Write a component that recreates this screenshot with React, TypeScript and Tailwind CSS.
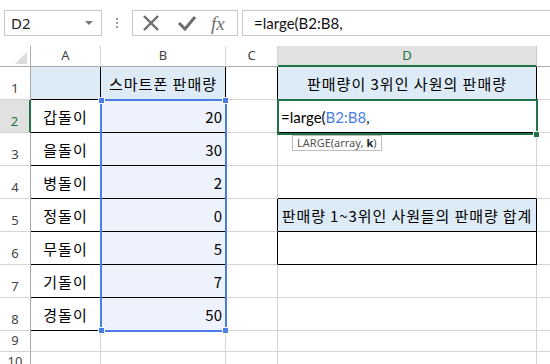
import React from "react"

const kr = { fontFamily: '"Noto Sans CJK KR", "Noto Sans", sans-serif' }
const ui = { fontFamily: '"Noto Sans", "Noto Sans CJK KR", sans-serif' }
const formula = { fontFamily: 'Lato, "Noto Sans", sans-serif' }

const names = ["갑돌이", "을돌이", "병돌이", "정돌이", "무돌이", "기돌이", "경돌이"]
const sales = [20, 30, 2, 0, 5, 7, 50]

function Toolbar() {
  return (
    <div className="flex h-[46px] items-start bg-white pt-[10px]">
      <div className="ml-[4px] flex h-[26px] w-[98px] items-center justify-between border border-[#c6c6c6] pl-[6px] pr-[8px]">
        <span className="text-[15px] text-[#222]" style={ui}>D2</span>
        <span className="block h-0 w-0 border-x-[4px] border-t-[4px] border-x-transparent border-t-[#777]" />
      </div>
      <div className="flex h-[26px] w-[30px] flex-col items-center justify-center gap-[2px]">
        <span className="h-[2px] w-[2px] bg-[#9a9a9a]" />
        <span className="h-[2px] w-[2px] bg-[#9a9a9a]" />
        <span className="h-[2px] w-[2px] bg-[#9a9a9a]" />
      </div>
      <div className="flex h-[26px] w-[106px] items-center border border-[#c6c6c6] pl-[9px]">
        <svg width="18" height="18" viewBox="0 0 18 18">
          <path d="M2 2 L16 16 M16 2 L2 16" stroke="#6e6e6e" strokeWidth="2.4" fill="none" />
        </svg>
        <svg width="20" height="18" viewBox="0 0 20 18" className="ml-[17px]">
          <path d="M2 9 L8 15 L18 3" stroke="#6e6e6e" strokeWidth="3" fill="none" />
        </svg>
        <span className="ml-[14px] text-[19px] italic leading-none text-[#6e6e6e]" style={{ fontFamily: '"Liberation Serif", serif' }}>
          fx
        </span>
      </div>
      <div className="ml-[4px] flex h-[26px] flex-1 items-center border-y border-l border-[#c6c6c6] pl-[11px]">
        <span className="text-[15px] text-[#111]" style={formula}>=large(B2:B8,</span>
      </div>
    </div>
  )
}

const grid = "border-r border-b border-[#d4d4d4]"
const rowHead = "flex items-end justify-center pb-[1px] text-[13px] text-[#444] border-r border-r-[#ababab] border-b border-b-[#d4d4d4]"

export default function App() {
  const rows = Array.from({ length: 10 }, (_, i) => i + 1)
  return (
    <div className="h-[364px] w-[550px] overflow-hidden bg-white">
      <Toolbar />
      <div className="relative grid grid-cols-[31px_70px_125px_52px_259px_13px] grid-rows-[21px_repeat(8,33px)_21px_21px]" style={kr}>
        {/* column headers */}
        <div className="relative border-r border-b border-[#ababab]">
          <span className="absolute bottom-[2px] right-[3px] h-0 w-0 border-b-[12px] border-l-[12px] border-l-transparent border-b-[#dcdcdc]" />
        </div>
        {["A", "B", "C"].map((c) => (
          <div key={c} className="flex items-center justify-center border-r border-r-[#d4d4d4] border-b border-b-[#ababab] text-[13px] text-[#444]" style={ui}>
            {c}
          </div>
        ))}
        <div className="flex items-center justify-center border-r border-r-[#c6c6c6] border-b-2 border-b-[#217346] bg-[#e1e1e1] text-[13px] text-[#217346]" style={ui}>
          D
        </div>
        <div className="border-b border-[#ababab]" />

        {rows.map((r) => {
          const inTable = r <= 8
          const dBox = r === 1 || r === 2 || r === 5 || r === 6
          return (
            <React.Fragment key={r}>
              <div className={r === 2 ? "flex items-end justify-center pb-[1px] text-[13px] text-[#217346] border-r-2 border-r-[#217346] border-b border-b-[#d4d4d4] bg-[#e1e1e1]" : rowHead} style={ui}>
                {r}
              </div>
              <div className={inTable ? `flex items-center justify-center pt-[2px] text-[15px] tracking-[1px] text-black border-r border-b border-black ${r === 1 ? "bg-[#ddebf7]" : ""}` : grid}>
                {r >= 2 && r <= 8 ? names[r - 2] : ""}
              </div>
              <div
                className={
                  inTable
                    ? `flex items-center pt-[2px] text-[15px] text-black border-r border-b border-black ${r === 1 ? "justify-center tracking-[1px] bg-[#ddebf7]" : "justify-end pr-[3px] bg-[#edf2fc]"}`
                    : grid
                }
              >
                {r === 1 ? "스마트폰 판매량" : r <= 8 ? sales[r - 2] : ""}
              </div>
              <div className={dBox ? "border-r border-r-black border-b border-b-[#d4d4d4]" : grid} />
              <div
                className={
                  r === 1
                    ? "flex items-center justify-center pt-[2px] text-[15px] tracking-[1px] bg-[#ddebf7] border-r border-b border-black"
                    : r === 2
                    ? "flex items-center pl-[3px] pt-[2px] text-[15px] border-r border-b border-black"
                    : r === 4
                    ? "border-r border-r-[#d4d4d4] border-b border-b-black"
                    : r === 5
                    ? "flex items-center justify-center pt-[2px] text-[15px] bg-[#ddebf7] border-r border-b border-black"
                    : r === 6
                    ? "border-r border-b border-black"
                    : grid
                }
              >
                {r === 1 && "판매량이 3위인 사원의 판매량"}
                {r === 2 && (
                  <span style={formula}>
                    =large(<span className="text-[#4a7ee6]">B2:B8</span>,
                  </span>
                )}
                {r === 5 && <span className="whitespace-nowrap tracking-[0.9px]">판매량 1~3위인 사원들의 판매량 합계</span>}
              </div>
              <div className="border-b border-[#d4d4d4]" />
            </React.Fragment>
          )
        })}

        {/* selection range B2:B8 */}
        <div className="pointer-events-none absolute left-[100px] top-[53px] h-[233px] w-[127px] border-2 border-[#4a7ee6]" />
        {[
          "left-[98px] top-[51px]",
          "left-[222px] top-[51px]",
          "left-[98px] top-[281px]",
          "left-[222px] top-[281px]",
        ].map((p) => (
          <span key={p} className={`absolute ${p} h-[7px] w-[7px] border border-white bg-[#4a7ee6]`} />
        ))}

        {/* active cell D2 */}
        <div className="pointer-events-none absolute left-[277px] top-[53px] h-[36px] w-[261px] border-2 border-[#217346]" />
        <span className="absolute left-[533px] top-[85px] h-[7px] w-[7px] border border-white bg-[#217346]" />

        {/* function tooltip */}
        <div className="absolute left-[292px] top-[89px] flex h-[16px] items-center border border-[#bdbdbd] bg-white px-[4px] text-[11px] text-[#555]" style={ui}>
          LARGE(array, <b className="ml-[3px] text-[#222]">k</b>)
        </div>
      </div>
    </div>
  )
}
